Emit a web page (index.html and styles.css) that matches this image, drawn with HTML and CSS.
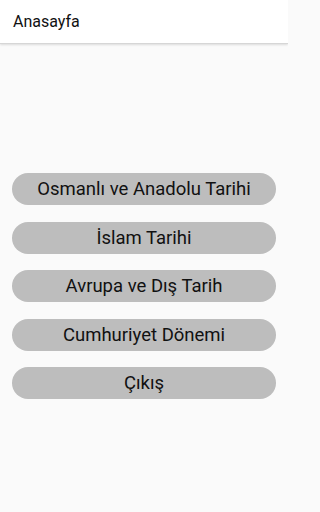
FILE: index.html
```html
<!DOCTYPE html>
<html lang="tr">
<head>
<meta charset="utf-8">
<link rel="stylesheet" href="styles.css">
</head>
<body>
<header class="bar"><span class="title">Anasayfa</span></header>
<main class="menu">
  <button class="btn">Osmanlı ve Anadolu Tarihi</button>
  <button class="btn">İslam Tarihi</button>
  <button class="btn">Avrupa ve Dış Tarih</button>
  <button class="btn">Cumhuriyet Dönemi</button>
  <button class="btn">Çıkış</button>
</main>
</body>
</html>
```
FILE: styles.css
```css
html {
  background: #fafafa;
}
html, body {
  margin: 0;
  padding: 0;
  font-family: Roboto, "Noto Sans", sans-serif;
  overflow: hidden;
}
body {
  width: 288px;
  height: 512px;
  background: #fafafa;
}
.bar {
  height: 44px;
  background: #ffffff;
  display: flex;
  align-items: center;
  padding-left: 13px;
  border-bottom: 1px solid #d6d6d6;
  box-shadow: 0 1px 2px rgba(0,0,0,0.12);
  box-sizing: border-box;
}
.title {
  font-size: 16px;
  color: #111111;
}
.menu {
  display: flex;
  flex-direction: column;
  gap: 16.5px;
  padding: 129px 12px 0 12px;
}
.btn {
  height: 32px;
  border: none;
  border-radius: 16px;
  background: #bdbdbd;
  color: #111111;
  font-family: Roboto, "Noto Sans", sans-serif;
  font-size: 18.5px;
  padding: 0;
  margin: 0;
}
```
